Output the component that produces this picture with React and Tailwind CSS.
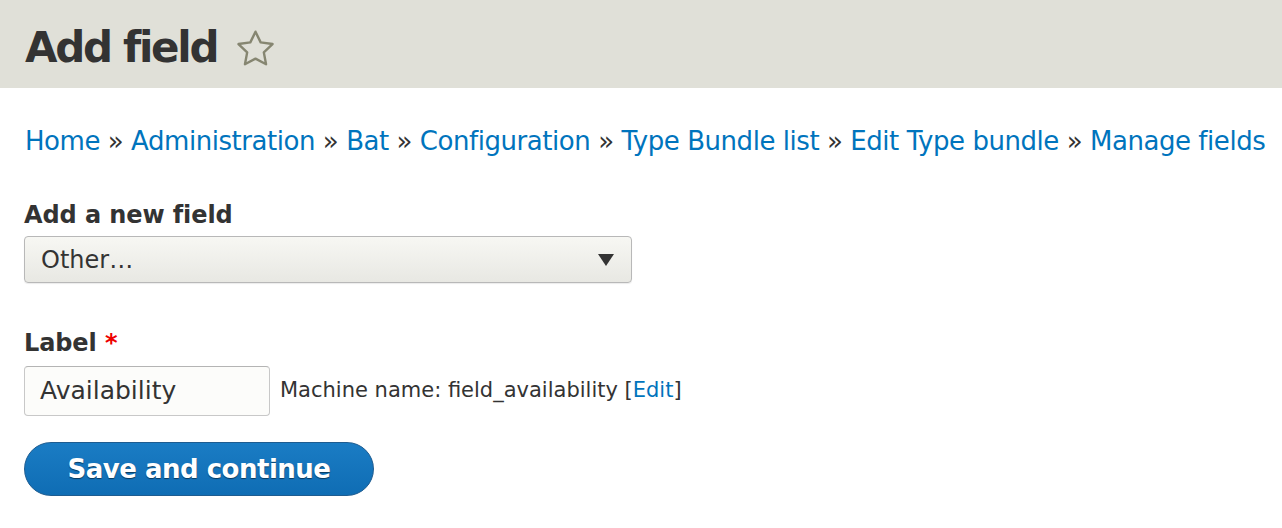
import React from "react";

const font = { fontFamily: '"DejaVu Sans", "Liberation Sans", sans-serif' };

function Star() {
  return (
    <svg width="37" height="37" viewBox="2 2 20 20" fill="none" stroke="#868671" strokeWidth="1.3" strokeLinejoin="round">
      <path d="M12 2.9l2.8 5.8 6.4.9-4.7 4.5 1.2 6.4L12 17.5l-5.7 3 1.2-6.4-4.7-4.5 6.4-.9z" />
    </svg>
  );
}

function Sep() {
  return <span className="text-[#333]"> » </span>;
}

export default function App() {
  const crumbs = ["Home", "Administration", "Bat", "Configuration", "Type Bundle list", "Edit Type bundle", "Manage fields"];
  return (
    <div className="w-[1282px] h-[528px] bg-white text-[#333] overflow-hidden" style={font}>
      {/* Header */}
      <div className="h-[88px] bg-[#e0e0d8] flex items-center px-[25px] pt-[8px] gap-[20px]">
        <h1 className="text-[42px] font-bold text-[#333] leading-none tracking-[-2.3px]">Add field</h1>
        <Star />
      </div>

      {/* Breadcrumb */}
      <div className="px-[25px] pt-[40px] text-[26px] leading-none whitespace-nowrap tracking-[-0.45px]">
        {crumbs.map((c, i) => (
          <React.Fragment key={c}>
            {i > 0 && <Sep />}
            <a className="text-[#0074bd]">{c}</a>
          </React.Fragment>
        ))}
      </div>

      {/* Add a new field */}
      <div className="px-[24px] pt-[49px]">
        <div className="text-[24px] font-bold leading-none mb-[9px] tracking-[-0.1px]">Add a new field</div>
        <div className="w-[608px] h-[47px] border border-[#b8b8b8] rounded-[4px] bg-gradient-to-b from-[#f7f7f3] to-[#e8e8e3] flex items-center justify-between pl-[16px] pr-[17px] shadow-[0_1px_1px_rgba(0,0,0,0.08)]">
          <span className="text-[24px]">Other<span className="tracking-[2px]">…</span></span>
          <svg width="16" height="12" viewBox="0 0 16 12"><path d="M0 0h16L8 12z" fill="#333" /></svg>
        </div>
      </div>

      {/* Label */}
      <div className="px-[24px] pt-[48px]">
        <div className="text-[24px] font-bold leading-none mb-[11px] tracking-[-0.1px]">
          Label <span className="text-[#e00]">*</span>
        </div>
        <div className="flex items-center gap-[10px]">
          <div className="w-[246px] h-[50px] border border-[#c8c8c8] border-t-[#b4b4b4] rounded-[4px] bg-[#fcfcfa] flex items-center pl-[15px]">
            <span className="text-[25px]">Availability</span>
          </div>
          <span className="text-[21px]">
            Machine name: field_availability [<a className="text-[#0074bd]">Edit</a>]
          </span>
        </div>
      </div>

      {/* Button */}
      <div className="px-[24px] pt-[26px]">
        <button className="w-[350px] h-[54px] rounded-full bg-gradient-to-b from-[#1a7cc4] to-[#0f6db4] border border-[#1e5c90] text-white text-[26px] font-bold [text-shadow:0_1px_1px_rgba(0,0,0,0.5)] tracking-[-0.5px]">
          Save and continue
        </button>
      </div>
    </div>
  );
}
